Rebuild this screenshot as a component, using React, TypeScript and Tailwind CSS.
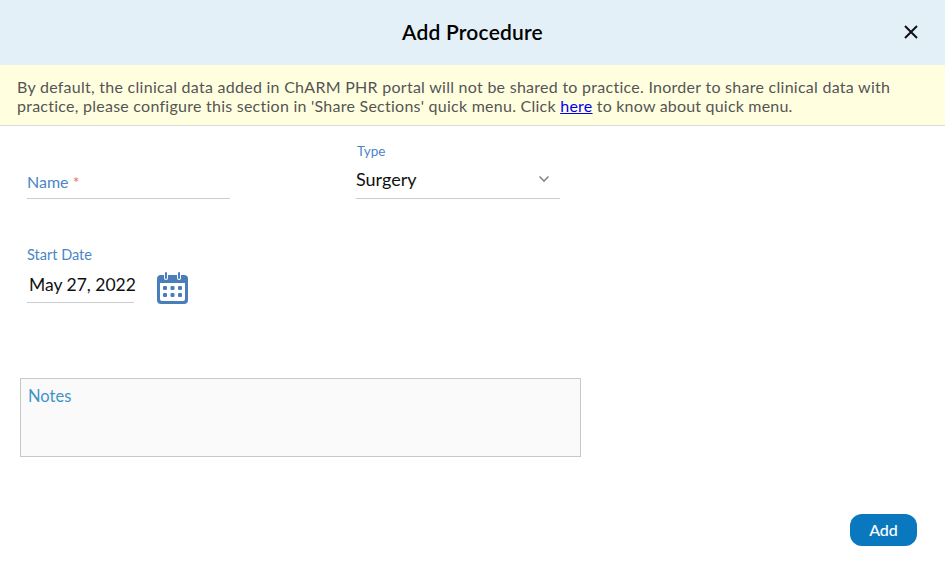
const FONT = 'font-["Lato","Liberation_Sans",sans-serif]'

function CalendarIcon() {
  return (
    <svg width="31" height="32" viewBox="0 0 31 32" aria-hidden className="block">
      <path
        fill="#4a7ebb"
        d="M5 3h22a4 4 0 0 1 4 4v21a4 4 0 0 1-4 4H4a4 4 0 0 1-4-4V7a4 4 0 0 1 4-4z"
      />
      <path fill="#fff" d="M3 11h25v16a2 2 0 0 1-2 2H5a2 2 0 0 1-2-2z" />
      <rect x="7" y="0" width="4" height="8" rx="2" fill="#fff" />
      <rect x="20" y="0" width="4" height="8" rx="2" fill="#fff" />
      <rect x="8" y="0" width="2" height="7" rx="1" fill="#4a7ebb" />
      <rect x="21" y="0" width="2" height="7" rx="1" fill="#4a7ebb" />
      <g fill="#4a7ebb">
        <rect x="6" y="14" width="4" height="4" rx="1" />
        <rect x="13.5" y="14" width="4" height="4" rx="1" />
        <rect x="21" y="14" width="4" height="4" rx="1" />
        <rect x="6" y="21" width="4" height="4" rx="1" />
        <rect x="13.5" y="21" width="4" height="4" rx="1" />
        <rect x="21" y="21" width="4" height="4" rx="1" />
      </g>
    </svg>
  )
}

export default function App() {
  return (
    <div className={`flex h-[577px] w-[945px] flex-col overflow-hidden bg-white ${FONT}`}>
      <header className="relative flex h-[65px] shrink-0 items-center justify-center bg-[#e3f0f7] pb-[2px]">
        <h1 className="text-[21px] font-semibold tracking-[0.2px] text-black">Add Procedure</h1>
        <button className="absolute right-[26px] top-[24px] text-[#111]" aria-label="Close">
          <svg width="16" height="16" viewBox="0 0 16 16" className="block">
            <path d="M2 2l12 12M14 2L2 14" stroke="currentColor" strokeWidth="2" fill="none" />
          </svg>
        </button>
      </header>

      <div className="h-[61px] shrink-0 border-b border-[#ddd] bg-[#ffffe0] px-[17px] pt-[12px] text-[16px] leading-[19px] tracking-[0.27px] whitespace-nowrap text-[#555]">
        By default, the clinical data added in ChARM PHR portal will not be shared to practice. Inorder to share clinical data with
        <br />
        <span className="tracking-[0.25px]">
          practice, please configure this section in 'Share Sections' quick menu. Click{' '}
        </span>
        <a href="#" className="tracking-[0.25px] text-[#0000ee] underline">here</a>
        <span className="tracking-[0.2px]"> to know about quick menu.</span>
      </div>

      <div className="flex shrink-0 pl-[27px] pt-[17px]">
        <div className="mt-[30px] h-[26px] w-[203px] border-b border-[#ccc] pt-[2px] text-[16px] leading-[13px] text-[#4a86c5]">
          Name <span className="text-[#f26d6d]">*</span>
        </div>
        <div className="ml-[126px] w-[204px] border-b border-[#ccc]">
          <div className="pl-[1px] text-[13.5px] leading-[17px] text-[#4a86c5]">Type</div>
          <div className="flex h-[38px] items-center justify-between pr-[10px] text-[18px] text-[#111]">
            Surgery
            <svg width="12" height="8" viewBox="0 0 12 8">
              <path d="M1.5 1.5L6 6l4.5-4.5" stroke="#888" strokeWidth="1.6" fill="none" />
            </svg>
          </div>
        </div>
      </div>

      <div className="mt-[47px] flex shrink-0 items-end pl-[27px]">
        <div className="w-[107px] border-b border-[#ccc]">
          <div className="text-[14.5px] leading-[17px] text-[#4a86c5]">Start Date</div>
          <div className="h-[39px] pl-[2px] pt-[2px] text-[17.5px] leading-[40px] whitespace-nowrap text-[#111]">May 27, 2022</div>
        </div>
        <div className="mb-[-1px] ml-[23px]">
          <CalendarIcon />
        </div>
      </div>

      <div className="ml-[20px] mt-[75px] h-[79px] w-[561px] shrink-0 border border-[#c8c8c8] bg-[#fafafa] px-[7px] pt-[8px] text-[16.5px] leading-[19px] text-[#3f93c9]">
        Notes
      </div>

      <div className="mt-[57px] flex justify-end pr-[28px]">
        <button className="h-[32px] w-[67px] rounded-[12px] bg-[#0a78bf] text-[16px] font-medium text-white">Add</button>
      </div>
    </div>
  )
}
